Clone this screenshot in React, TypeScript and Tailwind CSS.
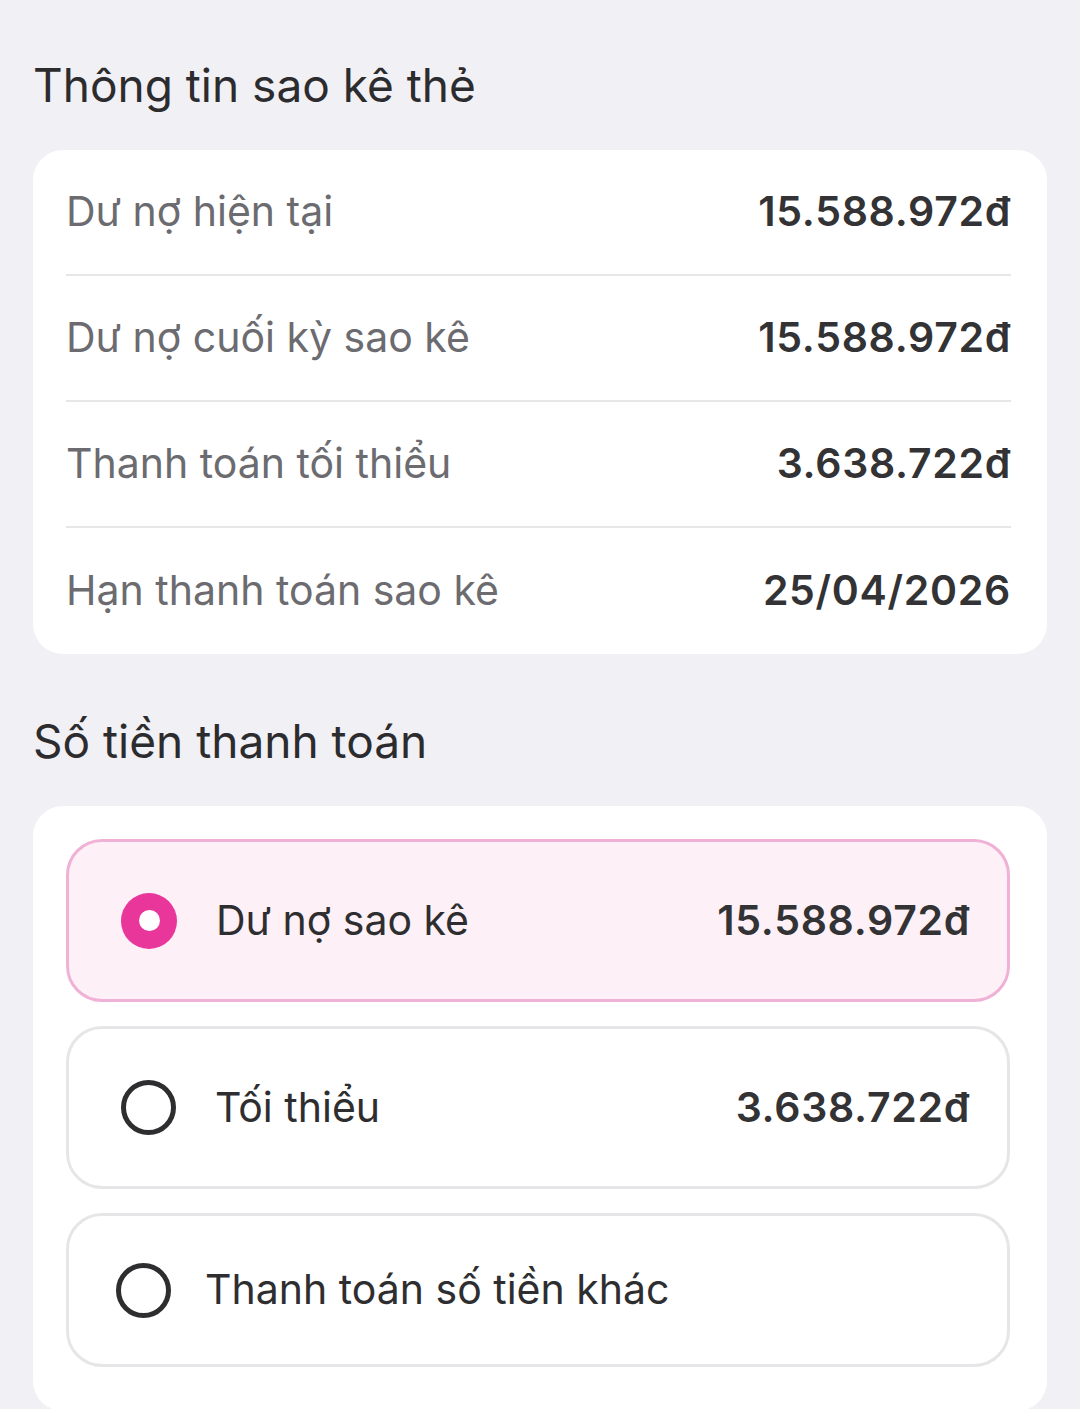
import { useState } from "react";

type Option = { id: string; label: string; amount?: string };

const STATEMENT = [
  { label: "Dư nợ hiện tại", value: "15.588.972đ" },
  { label: "Dư nợ cuối kỳ sao kê", value: "15.588.972đ" },
  { label: "Thanh toán tối thiểu", value: "3.638.722đ" },
  { label: "Hạn thanh toán sao kê", value: "25/04/2026" },
];

const OPTIONS: Option[] = [
  { id: "statement", label: "Dư nợ sao kê", amount: "15.588.972đ" },
  { id: "minimum", label: "Tối thiểu", amount: "3.638.722đ" },
  { id: "other", label: "Thanh toán số tiền khác" },
];

function Radio({ checked }: { checked: boolean }) {
  if (checked) {
    return (
      <span className="w-[56px] h-[56px] rounded-full bg-[#e8369b] flex items-center justify-center shrink-0">
        <span className="w-[21px] h-[21px] rounded-full bg-white" />
      </span>
    );
  }
  return <span className="w-[55px] h-[55px] rounded-full border-[5px] border-[#2e2e30] shrink-0" />;
}

export default function App() {
  const [selected, setSelected] = useState("statement");

  return (
    <div
      className="min-h-[1409px] bg-[#f1f0f5] px-[33px] pt-[57px] text-[#2c2c2e]"
      style={{ fontFamily: "Inter, 'Noto Sans', sans-serif" }}
    >
      {/* Statement info */}
      <h2 className="text-[46px] leading-[56px] font-normal mb-[37px]">Thông tin sao kê thẻ</h2>
      <div className="bg-white rounded-[30px] pl-[33px] pr-[36px]">
        {STATEMENT.map((row, i) => (
          <div
            key={row.label}
            className={`h-[126px] flex items-center justify-between ${
              i < STATEMENT.length - 1 ? "border-b-2 border-[#e7e7ea]" : ""
            }`}
          >
            <span className="text-[41px] text-[#6b6b70]">{row.label}</span>
            <span className="text-[41px] font-semibold tracking-[0.7px] text-[#333335]">{row.value}</span>
          </div>
        ))}
      </div>

      {/* Payment amount */}
      <h2 className="text-[46px] leading-[56px] font-normal mt-[59px] mb-[37px]">Số tiền thanh toán</h2>
      <div className="bg-white rounded-[30px] pl-[33px] pr-[37px] pt-[33px] pb-[44px] flex flex-col gap-[24px]">
        {OPTIONS.map((o) => {
          const active = selected === o.id;
          const last = o.id === "other";
          return (
            <button
              key={o.id}
              onClick={() => setSelected(o.id)}
              className={`flex items-center text-left rounded-[36px] border-[3px] ${
                active ? "bg-[#fdf0f7] border-[#f0b1d6]" : "bg-white border-[#e6e6e8]"
              } ${last ? "h-[154px] pl-[47px] pr-[37px] gap-[34px]" : "h-[163px] pl-[52px] pr-[37px] gap-[39px]"}`}
            >
              <Radio checked={active} />
              <span className="flex-1 text-[41px] text-[#2e2e30]">{o.label}</span>
              {o.amount && (
                <span className="text-[41px] font-semibold tracking-[0.7px] text-[#333335]">{o.amount}</span>
              )}
            </button>
          );
        })}
      </div>
    </div>
  );
}
